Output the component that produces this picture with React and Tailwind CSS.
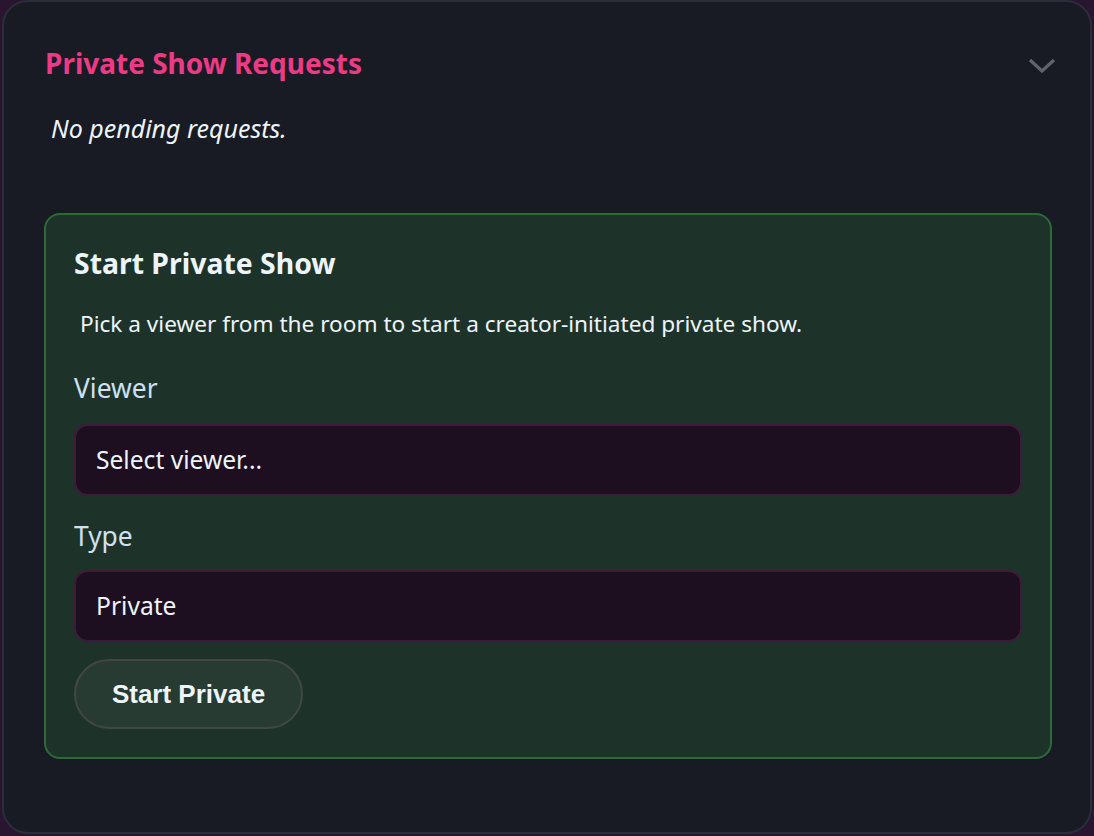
import React from "react";

const sans = { fontFamily: '"Noto Sans", "Open Sans", sans-serif' };

export default function App() {
  return (
    <div className="w-[1094px] h-[836px] bg-[#2a1530] overflow-hidden" style={sans}>
      <div className="ml-[2px] w-[1090px] h-[834px] rounded-[26px] border-2 border-[#2a2e39] bg-[#181b23] pl-[40px] pr-[38px] pt-[39px]">
        <div className="flex items-center justify-between h-[44px]">
          <h2 className="text-[28px] font-bold text-[#ec3a84] leading-none ml-[1px]">Private Show Requests</h2>
          <svg width="30" height="18" viewBox="0 0 30 18" className="mr-[-5px] mt-[6px]">
            <path d="M3 3 L15 14 L27 3" fill="none" stroke="#5d6470" strokeWidth="3.2" />
          </svg>
        </div>
        <p className="mt-[28px] ml-[7px] italic text-[25px] leading-[30px] text-[#eef4fb]">No pending requests.</p>
        <div className="mt-[70px] rounded-[16px] border-2 border-[#2d6a39] bg-[#1d3329] px-[28px] pt-[28px] pb-[28px]">
          <h3 className="text-[28.4px] font-bold text-[#eef4fb] leading-[40px]">Start Private Show</h3>
          <p className="mt-[26px] ml-[6px] text-[22.6px] text-[#eef4fb] leading-[30px]">Pick a viewer from the room to start a creator-initiated private show.</p>
          <div className="mt-[33px] text-[26.4px] text-[#cfe0f2] leading-[32px]">Viewer</div>
          <div className="mt-[20px] h-[72px] rounded-[14px] border-2 border-[#3e1a3b] bg-[#1d0f20] flex items-center px-[20px] text-[24.6px] text-[#eef4fb]">Select viewer...</div>
          <div className="mt-[24px] text-[26.4px] text-[#cfe0f2] leading-[32px]">Type</div>
          <div className="mt-[18px] h-[72px] rounded-[14px] border-2 border-[#3e1a3b] bg-[#1d0f20] flex items-center px-[20px] text-[24.6px] text-[#eef4fb]">Private</div>
          <button className="mt-[17px] h-[70px] w-[229px] rounded-full border-2 border-[#424645] bg-[#283b33] text-[26px] font-bold text-[#eef4fb]" style={{ fontFamily: '"Liberation Sans", Arial, sans-serif' }}>Start Private</button>
        </div>
      </div>
    </div>
  );
}
